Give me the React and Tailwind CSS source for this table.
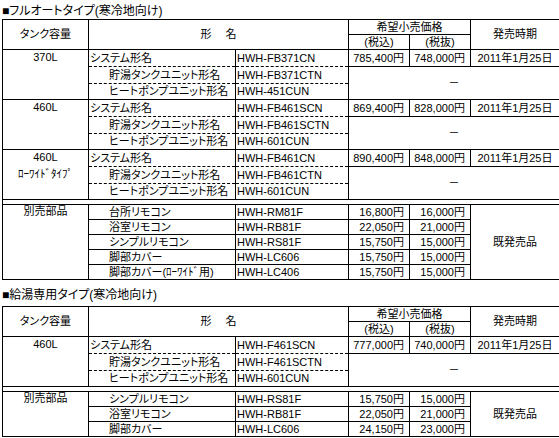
const B = 'border border-black';
const DB = 'border border-black [border-bottom-style:dashed]';
const DTB = 'border border-black [border-top-style:dashed] [border-bottom-style:dashed]';
const DT = 'border border-black [border-top-style:dashed]';

const Header = () => (
  <thead>
    <tr className="h-[15px]">
      <td rowSpan={2} className={`${B} text-center`}>タンク容量</td>
      <td rowSpan={2} colSpan={2} className={`${B} text-center`}>形　 名</td>
      <td colSpan={2} className={`${B} text-center`}>希望小売価格</td>
      <td rowSpan={2} className={`${B} text-center`}>発売時期</td>
    </tr>
    <tr className="h-[15px]">
      <td className={`${B} text-center`}>(税込)</td>
      <td className={`${B} text-center`}>(税抜)</td>
    </tr>
  </thead>
);

const Block = ({ cap, model, tank, pump, inc, exc }) => (
  <>
    <tr className="h-[17px]">
      <td rowSpan={3} className={`${B} text-center align-top pt-px`}>{cap}</td>
      <td className={`${DB} pl-px`}>システム形名</td>
      <td className={`${DB} pl-px`}>{model}</td>
      <td className={`${B} text-right pr-[5px]`}>{inc}</td>
      <td className={`${B} text-right pr-[5px]`}>{exc}</td>
      <td className={`${B} text-center`}>2011年1月25日</td>
    </tr>
    <tr className="h-[17px]">
      <td className={`${DTB} pl-[20px]`}>貯湯タンクユニット形名</td>
      <td className={`${DTB} pl-px`}>{tank}</td>
      <td rowSpan={2} colSpan={3} className={`${B} text-center`}>－</td>
    </tr>
    <tr className="h-[16px]">
      <td className={`${DT} pl-[20px]`}>ヒートポンプユニット形名</td>
      <td className={`${DT} pl-px`}>{pump}</td>
    </tr>
  </>
);

const Spacer = () => (
  <tr className="h-[5px]">
    <td colSpan={6} className={B}></td>
  </tr>
);

const Parts = ({ rows }) => (
  <>
    {rows.map((r, i) => (
      <tr key={i} className="h-[15px]">
        {i === 0 && (
          <td rowSpan={rows.length} className={`${B} text-center align-top`}>別売部品</td>
        )}
        <td className={`${B} pl-[20px]`}>{r[0]}</td>
        <td className={`${B} pl-px`}>{r[1]}</td>
        <td className={`${B} text-right pr-[5px]`}>{r[2]}</td>
        <td className={`${B} text-right pr-[5px]`}>{r[3]}</td>
        {i === 0 && (
          <td rowSpan={rows.length} className={`${B} text-center`}>既発売品</td>
        )}
      </tr>
    ))}
  </>
);

const Cols = () => (
  <colgroup>
    <col className="w-[86px]" />
    <col className="w-[147px]" />
    <col className="w-[113px]" />
    <col className="w-[61px]" />
    <col className="w-[61px]" />
    <col className="w-[89px]" />
  </colgroup>
);

export default function App() {
  return (
    <div className="w-[559px] h-[438px] bg-white text-black text-[11px] leading-[13px] font-['Liberation_Sans','Noto_Sans_CJK_JP',sans-serif] [font-feature-settings:'palt'] overflow-hidden">
      <div className="h-[19px] pl-[2px] pt-[4px] text-[12px] leading-[14px]">■フルオートタイプ(寒冷地向け)</div>
      <table className="ml-[2px] w-[557px] table-fixed border-collapse">
        <Cols />
        <Header />
        <tbody>
          <Block cap="370L" model="HWH-FB371CN" tank="HWH-FB371CTN" pump="HWH-451CUN" inc="785,400円" exc="748,000円" />
          <Block cap="460L" model="HWH-FB461SCN" tank="HWH-FB461SCTN" pump="HWH-601CUN" inc="869,400円" exc="828,000円" />
          <Block
            cap={<><div>460L</div><div className="mt-[4px]">ﾛｰﾜｲﾄﾞﾀｲﾌﾟ</div></>}
            model="HWH-FB461CN" tank="HWH-FB461CTN" pump="HWH-601CUN" inc="890,400円" exc="848,000円"
          />
          <Spacer />
          <Parts
            rows={[
              ['台所リモコン', 'HWH-RM81F', '16,800円', '16,000円'],
              ['浴室リモコン', 'HWH-RB81F', '22,050円', '21,000円'],
              ['シンプルリモコン', 'HWH-RS81F', '15,750円', '15,000円'],
              ['脚部カバー', 'HWH-LC606', '15,750円', '15,000円'],
              ['脚部カバー(ﾛｰﾜｲﾄﾞ用)', 'HWH-LC406', '15,750円', '15,000円'],
            ]}
          />
        </tbody>
      </table>
      <div className="h-[26px] pl-[2px] pt-[8px] text-[12px] leading-[14px]">■給湯専用タイプ(寒冷地向け)</div>
      <table className="ml-[2px] w-[557px] table-fixed border-collapse">
        <Cols />
        <Header />
        <tbody>
          <Block cap="460L" model="HWH-F461SCN" tank="HWH-F461SCTN" pump="HWH-601CUN" inc="777,000円" exc="740,000円" />
          <Spacer />
          <Parts
            rows={[
              ['シンプルリモコン', 'HWH-RS81F', '15,750円', '15,000円'],
              ['浴室リモコン', 'HWH-RB81F', '22,050円', '21,000円'],
              ['脚部カバー', 'HWH-LC606', '24,150円', '23,000円'],
            ]}
          />
        </tbody>
      </table>
    </div>
  );
}
